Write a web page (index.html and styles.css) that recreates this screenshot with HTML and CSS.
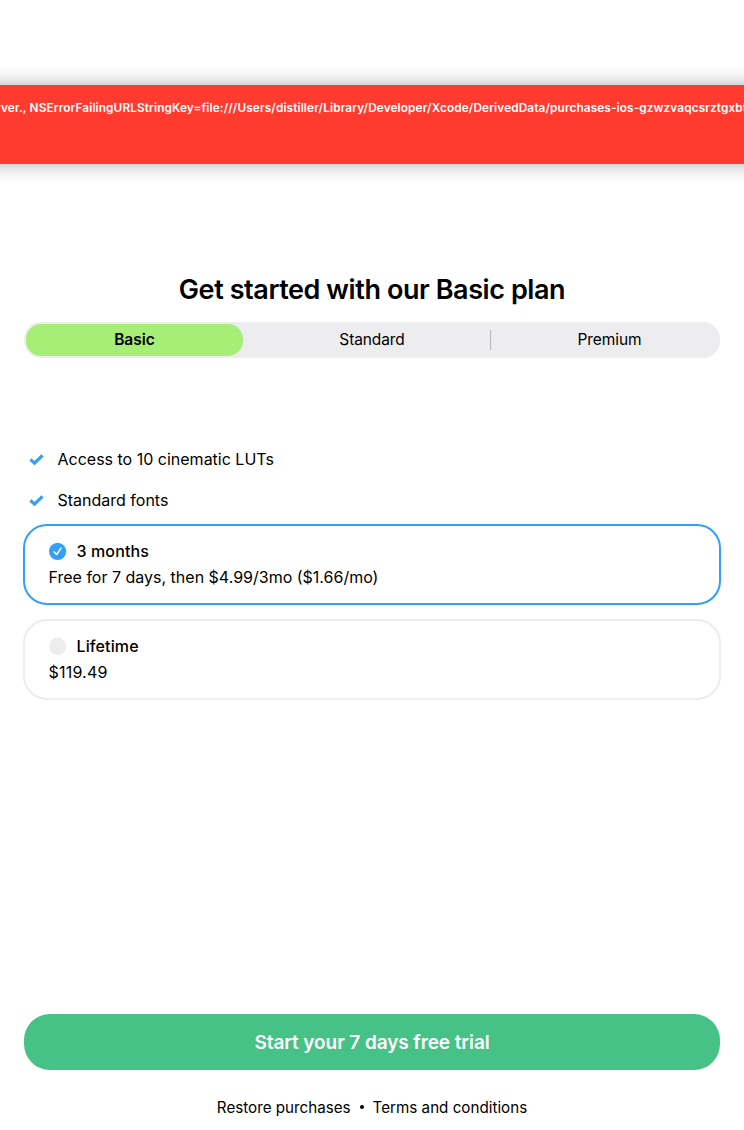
FILE: index.html
```html
<!DOCTYPE html>
<html lang="en"><head><meta charset="utf-8"><title>Plans</title><link rel="stylesheet" href="styles.css"></head>
<body>
<main class="paywall">
  <div class="error"><svg class="line" width="744" height="20"><text x="-4" y="12" textLength="751" class="error-text">rver., NSErrorFailingURLStringKey=file:///Users/distiller/Library/Developer/Xcode/DerivedData/purchases-ios-gzwzvaqcsrztgxbt</text></svg></div>
  <h1 class="title"><span class="t-title">Get started with our Basic plan</span></h1>
  <nav class="tabs">
    <div class="tab tab-active"><span>Basic</span></div>
    <div class="tab"><span class="t-tab">Standard</span></div>
    <div class="tab tab-divided"><span class="t-tab">Premium</span></div>
  </nav>
  <ul class="features">
    <li class="feature"><svg class="check" viewBox="0 0 15 12"><path d="M1.4 6.3 5.5 10.2 13.5 2.4"/></svg><span>Access to 10 cinematic LUTs</span></li>
    <li class="feature"><svg class="check" viewBox="0 0 15 12"><path d="M1.4 6.3 5.5 10.2 13.5 2.4"/></svg><span>Standard fonts</span></li>
  </ul>
  <section class="packages">
    <div class="package package-selected">
      <div class="package-name"><svg class="radio" viewBox="0 0 18 18"><circle cx="8.6" cy="9.3" r="8.6" fill="#329ff8"/><path d="M5.2 9.9 7.6 12.5 12 6.1" fill="none" stroke="#fff" stroke-width="1.5" stroke-linecap="round" stroke-linejoin="round"/></svg><span>3 months</span></div>
      <div class="package-price"><span>Free for 7 days, then $4.99/3mo ($1.66/mo)</span></div>
    </div>
    <div class="package">
      <div class="package-name"><svg class="radio" viewBox="0 0 18 18"><circle cx="8.6" cy="9.3" r="8.6" fill="#ededf0"/></svg><span>Lifetime</span></div>
      <div class="package-price"><span class="t-price">$119.49</span></div>
    </div>
  </section>
  <button class="cta"><span>Start your 7 days free trial</span></button>
  <footer class="footer"><span>Restore purchases</span><i class="dot"></i><span>Terms and conditions</span></footer>
</main>
</body></html>
```
FILE: styles.css
```css
* { box-sizing: border-box; }
body { margin: 0; background: #fff; color: #000; font-family: Inter, "Liberation Sans", sans-serif; font-size: 16px; }
.paywall { display: flex; flex-direction: column; height: 1130px; padding-top: 85px; overflow: hidden; }
.paywall span { white-space: nowrap; }
.error { flex: none; height: 79px; margin: 0 -30px; padding: 15px 30px 0; background: #ff3b30; box-shadow: 0 0 18px rgba(0,0,0,.33); }
.line { display: block; }
.error-text { fill: #fff; font-size: 11.8px; font-weight: 600; }
.title { margin: 108px 0 0; height: 36px; line-height: 36px; font-size: 27px; font-weight: 600; text-align: center; }
.t-title { letter-spacing: -0.42px; }
.tabs { display: flex; gap: 20.5px; flex: none; height: 36px; margin: 14px 24px 0; padding: 2px; border-radius: 17px; background: #ededf0; }
.tab { flex: 1; display: flex; align-items: center; justify-content: center; position: relative; padding-bottom: 2px; font-size: 15.5px; }
.t-tab { letter-spacing: -0.1px; }
.tab-active { border-radius: 15px; background: #a7ee77; font-weight: 600; }
.tab-divided::before { content: ""; position: absolute; left: -11px; top: 6px; width: 1px; height: 20px; background: #b8b8bc; }
.features { list-style: none; margin: 80px 0 0; padding: 0 29px; }
.feature { display: flex; align-items: center; height: 41px; gap: 13.5px; }
.check { width: 15px; height: 12px; fill: none; stroke: #329ff8; stroke-width: 3.1; }
.packages { display: flex; flex-direction: column; gap: 14px; margin: 4px 23px 0; }
.package { height: 81px; padding: 12px 23.5px; border: 2px solid #ededf0; border-radius: 24px; }
.package-selected { border-color: #329ff8; }
.package-name { display: flex; align-items: center; gap: 10px; height: 26px; font-weight: 500; letter-spacing: 0.12px; }
.radio { width: 18px; height: 18px; }
.package-price { line-height: 26px; }
.t-price { letter-spacing: 0.2px; }
.cta { flex: none; margin: 314px 24px 0; height: 56px; padding: 0; border: 0; border-radius: 26px; background: #46c286; color: #fff; font: 600 19px Inter, sans-serif; letter-spacing: -0.08px; }
.footer { display: flex; align-items: center; justify-content: center; gap: 9px; margin-top: 26px; height: 22px; font-size: 15.2px; }
.dot { width: 4px; height: 4px; border-radius: 50%; background: #000; }
```
